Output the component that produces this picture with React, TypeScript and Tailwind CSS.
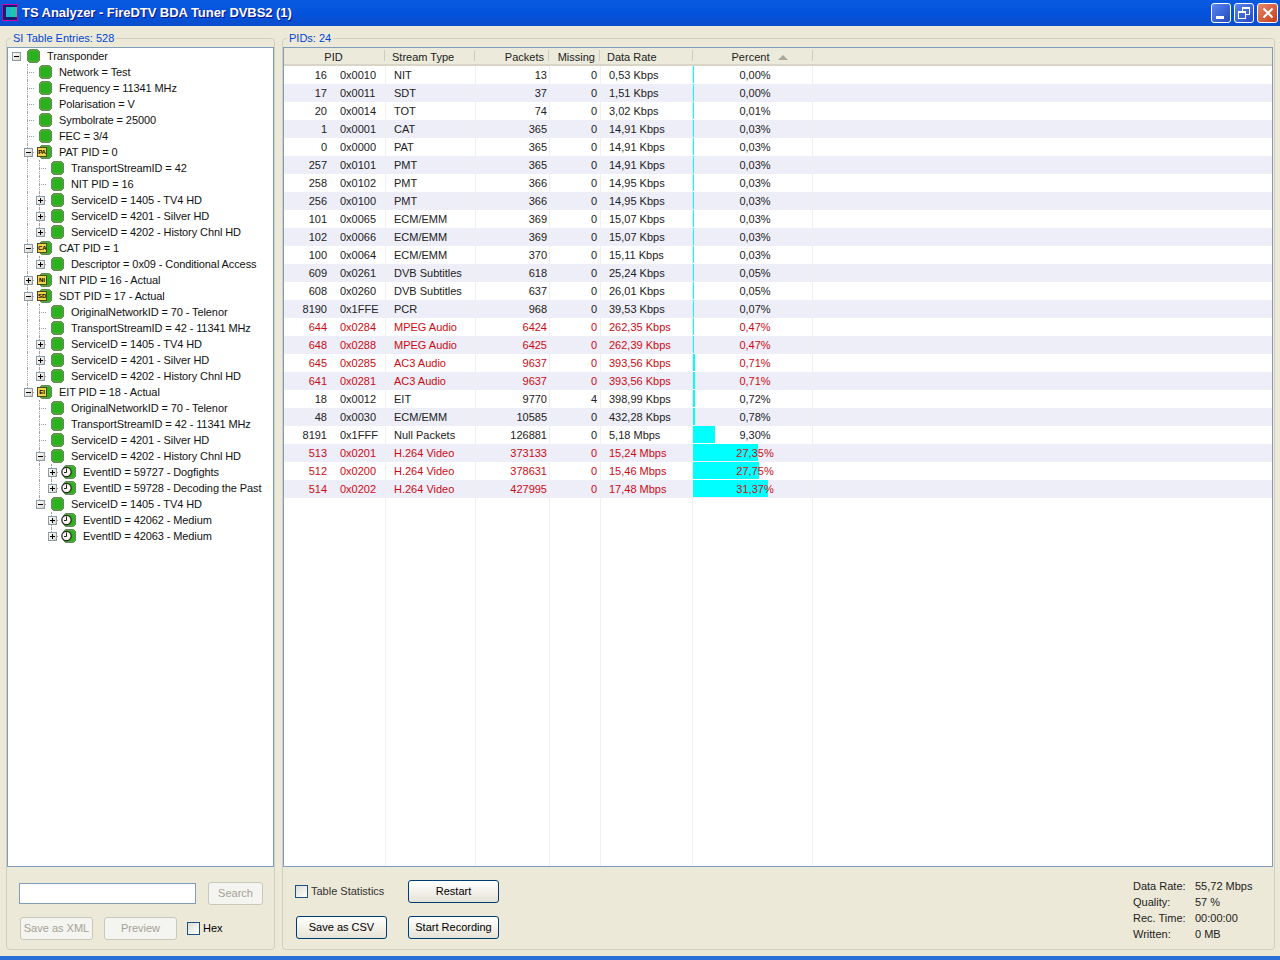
import React from 'react';

const font = "font-['Liberation_Sans',sans-serif]";

type Icon = 'dot' | 'PA' | 'CA' | 'NI' | 'SD' | 'EI' | 'clock';
type Node = { text: string; icon?: Icon; open?: boolean; kids?: Node[] };

const leaf = (text: string): Node => ({ text });
const closed = (text: string, icon?: Icon): Node => ({ text, icon, open: false, kids: [leaf('')] });

const tree: Node = {
  text: 'Transponder',
  open: true,
  kids: [
    leaf('Network = Test'),
    leaf('Frequency = 11341 MHz'),
    leaf('Polarisation = V'),
    leaf('Symbolrate = 25000'),
    leaf('FEC = 3/4'),
    {
      text: 'PAT PID = 0',
      icon: 'PA',
      open: true,
      kids: [
        leaf('TransportStreamID = 42'),
        leaf('NIT PID = 16'),
        closed('ServiceID = 1405 - TV4 HD'),
        closed('ServiceID = 4201 - Silver HD'),
        closed('ServiceID = 4202 - History Chnl HD'),
      ],
    },
    { text: 'CAT PID = 1', icon: 'CA', open: true, kids: [closed('Descriptor = 0x09 - Conditional Access')] },
    closed('NIT PID = 16 - Actual', 'NI'),
    {
      text: 'SDT PID = 17 - Actual',
      icon: 'SD',
      open: true,
      kids: [
        leaf('OriginalNetworkID = 70 - Telenor'),
        leaf('TransportStreamID = 42 - 11341 MHz'),
        closed('ServiceID = 1405 - TV4 HD'),
        closed('ServiceID = 4201 - Silver HD'),
        closed('ServiceID = 4202 - History Chnl HD'),
      ],
    },
    {
      text: 'EIT PID = 18 - Actual',
      icon: 'EI',
      open: true,
      kids: [
        leaf('OriginalNetworkID = 70 - Telenor'),
        leaf('TransportStreamID = 42 - 11341 MHz'),
        leaf('ServiceID = 4201 - Silver HD'),
        {
          text: 'ServiceID = 4202 - History Chnl HD',
          open: true,
          kids: [closed('EventID = 59727 - Dogfights', 'clock'), closed('EventID = 59728 - Decoding the Past', 'clock')],
        },
        {
          text: 'ServiceID = 1405 - TV4 HD',
          open: true,
          kids: [closed('EventID = 42062 - Medium', 'clock'), closed('EventID = 42063 - Medium', 'clock')],
        },
      ],
    },
  ],
};

type Flat = { node: Node; guides: boolean[]; last: boolean };

function flatten(node: Node, guides: boolean[], last: boolean, out: Flat[]) {
  out.push({ node, guides, last });
  if (node.open && node.kids) {
    node.kids.forEach((k, i) => flatten(k, [...guides, !last], i === node.kids!.length - 1, out));
  }
  return out;
}

const rows: [string, string, string, string, string, string, string][] = [
  ['16', '0x0010', 'NIT', '13', '0', '0,53 Kbps', '0,00'],
  ['17', '0x0011', 'SDT', '37', '0', '1,51 Kbps', '0,00'],
  ['20', '0x0014', 'TOT', '74', '0', '3,02 Kbps', '0,01'],
  ['1', '0x0001', 'CAT', '365', '0', '14,91 Kbps', '0,03'],
  ['0', '0x0000', 'PAT', '365', '0', '14,91 Kbps', '0,03'],
  ['257', '0x0101', 'PMT', '365', '0', '14,91 Kbps', '0,03'],
  ['258', '0x0102', 'PMT', '366', '0', '14,95 Kbps', '0,03'],
  ['256', '0x0100', 'PMT', '366', '0', '14,95 Kbps', '0,03'],
  ['101', '0x0065', 'ECM/EMM', '369', '0', '15,07 Kbps', '0,03'],
  ['102', '0x0066', 'ECM/EMM', '369', '0', '15,07 Kbps', '0,03'],
  ['100', '0x0064', 'ECM/EMM', '370', '0', '15,11 Kbps', '0,03'],
  ['609', '0x0261', 'DVB Subtitles', '618', '0', '25,24 Kbps', '0,05'],
  ['608', '0x0260', 'DVB Subtitles', '637', '0', '26,01 Kbps', '0,05'],
  ['8190', '0x1FFE', 'PCR', '968', '0', '39,53 Kbps', '0,07'],
  ['644', '0x0284', 'MPEG Audio', '6424', '0', '262,35 Kbps', '0,47'],
  ['648', '0x0288', 'MPEG Audio', '6425', '0', '262,39 Kbps', '0,47'],
  ['645', '0x0285', 'AC3 Audio', '9637', '0', '393,56 Kbps', '0,71'],
  ['641', '0x0281', 'AC3 Audio', '9637', '0', '393,56 Kbps', '0,71'],
  ['18', '0x0012', 'EIT', '9770', '4', '398,99 Kbps', '0,72'],
  ['48', '0x0030', 'ECM/EMM', '10585', '0', '432,28 Kbps', '0,78'],
  ['8191', '0x1FFF', 'Null Packets', '126881', '0', '5,18 Mbps', '9,30'],
  ['513', '0x0201', 'H.264 Video', '373133', '0', '15,24 Mbps', '27,35'],
  ['512', '0x0200', 'H.264 Video', '378631', '0', '15,46 Mbps', '27,75'],
  ['514', '0x0202', 'H.264 Video', '427995', '0', '17,48 Mbps', '31,37'],
];

const redPids = ['644', '648', '645', '641', '513', '512', '514'];

function GreenDot({ className = '' }: { className?: string }) {
  return (
    <svg width="13" height="14" viewBox="0 0 13 14" className={className}>
      <path d="M2.500 .5h8l2 2v9l-2 2h-8l-2-2v-9z" fill="#58a63c" stroke="#5f8a58" />
      <path d="M3 2h7l1.500 1.500v7L10 12H3l-1.500-1.500v-7z" fill="#2bb11e" />
    </svg>
  );
}

function TreeIcon({ icon }: { icon?: Icon }) {
  if (icon === 'clock') {
    return (
      <span className="relative w-[13px] h-[14px] shrink-0">
        <GreenDot className="absolute left-0 top-0" />
        <svg width="11" height="12" viewBox="0 0 11 12" className="absolute left-[-2px] top-[1px]">
          <circle cx="5.500" cy="6" r="4.700" fill="#f4f4ea" stroke="#222" strokeWidth="1.200" />
          <path d="M5.500 2.500V6.500H3" fill="none" stroke="#222" strokeWidth="1" />
        </svg>
      </span>
    );
  }
  if (icon && icon !== 'dot') {
    return (
      <span className="relative w-[13px] h-[14px] shrink-0">
        <GreenDot />
        <span className="absolute left-[-2px] top-[2px] w-[10px] h-[10px] bg-[#f3d34a] border border-[#4a4a18] text-[6px] leading-[8px] font-bold text-center text-black overflow-hidden">
          {icon}
        </span>
      </span>
    );
  }
  return <GreenDot className="shrink-0" />;
}

function Expander({ open }: { open: boolean }) {
  return (
    <span className="relative z-10 w-[9px] h-[9px] border border-[#8a9aa8] bg-gradient-to-br from-white to-[#d8d4c8] flex items-center justify-center">
      <span className="absolute w-[5px] h-px bg-black" />
      {!open && <span className="absolute w-px h-[5px] bg-black" />}
    </span>
  );
}

function TreeRow({ item, index }: { item: Flat; index: number }) {
  const { node, guides, last } = item;
  const hasKids = !!node.kids;
  return (
    <div className="flex items-center h-4 pl-[2px] text-[11px] tracking-[-0.1px] text-[#111] whitespace-nowrap">
      {guides.map((g, i) => (
        <span key={i} className="relative w-3 h-4 shrink-0">
          {g && i > 0 && <span className="absolute left-[5px] top-0 bottom-0 border-l border-dotted border-[#a0a0a0]" />}
        </span>
      ))}
      <span className="relative w-3 h-4 shrink-0 flex items-center justify-center">
        {index > 0 && (
          <span className={`absolute left-[5px] top-0 border-l border-dotted border-[#a0a0a0] ${last ? 'h-2' : 'h-4'}`} />
        )}
        {index > 0 && <span className="absolute left-[5px] top-[8px] w-[7px] border-t border-dotted border-[#a0a0a0]" />}
        {hasKids && <Expander open={!!node.open} />}
      </span>
      <span className="ml-[5px] flex">
        <TreeIcon icon={node.icon} />
      </span>
      <span className="ml-[7px]">{node.text}</span>
    </div>
  );
}

function HeaderCell({ className = '', children }: { className?: string; children: React.ReactNode }) {
  return (
    <div className={`relative h-full flex items-center pt-[2px] shrink-0 ${className}`}>
      {children}
      <span className="absolute right-0 top-[2px] bottom-[3px] w-px bg-[#cfccbc]" />
    </div>
  );
}

function PidTable() {
  return (
    <div className="relative h-full bg-white overflow-hidden">
      <div className="flex h-[18px] items-center bg-[#ebeadb] border-b-[2px] border-[#d8d5c6] text-[11px] text-[#222]">
        <HeaderCell className="w-[101px] justify-center pr-[2px]">PID</HeaderCell>
        <HeaderCell className="w-[90px] pl-[7px]">Stream Type</HeaderCell>
        <HeaderCell className="w-[74px] justify-end pr-[5px]">Packets</HeaderCell>
        <HeaderCell className="w-[51px] justify-end pr-[5px]">Missing</HeaderCell>
        <HeaderCell className="w-[93px] pl-[7px]">Data Rate</HeaderCell>
        <HeaderCell className="w-[120px] justify-center pr-[5px]">
          Percent
          <svg width="10" height="5" viewBox="0 0 10 5" className="absolute left-[85px] top-[7px]">
            <path d="M5 0l5 5H0z" fill="#aca899" />
          </svg>
        </HeaderCell>
      </div>
      {rows.map((r, i) => {
        const red = redPids.includes(r[0]);
        const pct = parseFloat(r[6].replace(',', '.'));
        return (
          <div
            key={r[0]}
            className={`flex h-[18px] items-center text-[11px] ${i % 2 ? 'bg-[#eeeef8]' : 'bg-white'} ${red ? 'text-[#cc0a14]' : 'text-[#222]'}`}
          >
            <div className="w-[43px] shrink-0 text-right">{r[0]}</div>
            <div className="w-[58px] shrink-0 pl-[13px]">{r[1]}</div>
            <div className="w-[90px] shrink-0 pl-[9px] whitespace-nowrap">{r[2]}</div>
            <div className="w-[72px] shrink-0 text-right">{r[3]}</div>
            <div className="w-[50px] shrink-0 text-right">{r[4]}</div>
            <div className="w-[95px] shrink-0 pl-[12px] whitespace-nowrap">{r[5]}</div>
            <div className="relative w-[120px] shrink-0 h-full pl-[6px] flex items-center justify-center">
              <span
                className="absolute left-[1px] top-0 h-[17px] bg-[#00ffff]"
                style={{ width: Math.max(1, Math.round(pct * 2.39)) }}
              />
              <span className="relative">{r[6]}%</span>
            </div>
          </div>
        );
      })}
      {[101, 191, 265, 316, 408, 528].map(x => (
        <span key={x} className="absolute top-[18px] bottom-0 w-px bg-[#f0f0ee]" style={{ left: x }} />
      ))}
    </div>
  );
}

function Check({ label, muted }: { label: string; muted?: boolean }) {
  return (
    <label className={`flex items-center gap-[3px] text-[11px] ${muted ? 'text-[#333]' : 'text-black'}`}>
      <span className="w-[13px] h-[13px] border border-[#1c5180] bg-gradient-to-br from-[#dcdcd7] to-white" />
      {label}
    </label>
  );
}

function Btn({ label, disabled, className = '' }: { label: string; disabled?: boolean; className?: string }) {
  return disabled ? (
    <button className={`h-[23px] rounded-[3px] border border-[#cac8bb] bg-[#f4f4f0] text-[11px] whitespace-nowrap text-[#a5a294] ${className}`}>
      {label}
    </button>
  ) : (
    <button className={`h-[23px] w-[91px] rounded-[3px] border border-[#003c74] bg-gradient-to-b from-white to-[#e6e3d6] text-[11px] whitespace-nowrap text-black ${className}`}>
      {label}
    </button>
  );
}

function Group({ legend, className = '', children }: { legend: string; className?: string; children: React.ReactNode }) {
  return (
    <div className={`relative border border-[#d0d0bf] rounded-[4px] pt-[8px] flex flex-col ${className}`}>
      <span className="absolute left-[4px] top-[-8px] bg-[#ece9d8] px-[2px] text-[11px] leading-[14px] text-[#0046d5]">
        {legend}
      </span>
      {children}
    </div>
  );
}

export default function App() {
  const flat = flatten(tree, [], true, []);
  return (
    <div className={`w-[1280px] h-[960px] overflow-hidden flex flex-col bg-[#ece9d8] ${font}`}>
      <div className="h-[26px] shrink-0 flex items-center bg-gradient-to-b from-[#0a5ae0] via-[#0352dd] to-[#0a4ecb]">
        <svg width="16" height="17" viewBox="0 0 16 17" className="ml-[2px] mt-[-1px] shrink-0">
          <rect x="0.500" y="0.500" width="15" height="16" fill="#14206e" stroke="#d000b0" />
          <rect x="4" y="3" width="11" height="10" fill="#1cc8a8" />
          <rect x="4" y="3" width="5" height="10" fill="#22b4d8" />
        </svg>
        <span className="ml-[4px] text-[13px] font-bold tracking-[-0.05px] text-white [text-shadow:1px_1px_#0f1089] whitespace-pre">
          TS Analyzer - FireDTV BDA Tuner DVBS2 (1)
        </span>
        <div className="ml-auto mr-[2px] flex gap-[3px]">
          <div className="relative w-[20px] h-[20px] rounded-[3px] border border-white bg-gradient-to-br from-[#5a86ee] to-[#2449c0]">
            <span className="absolute left-[4px] bottom-[3px] w-[8px] h-[3px] bg-white" />
          </div>
          <div className="relative w-[20px] h-[20px] rounded-[3px] border border-white bg-gradient-to-br from-[#5a86ee] to-[#2449c0]">
            <span className="absolute left-[7px] top-[3px] w-[8px] h-[8px] border border-white border-t-2" />
            <span className="absolute left-[3px] top-[7px] w-[8px] h-[8px] border border-white border-t-2 bg-[#3d64d8]" />
          </div>
          <div className="w-[21px] h-[20px] rounded-[3px] border border-white bg-gradient-to-br from-[#e8866a] to-[#c63a12] flex items-center justify-center">
            <svg width="12" height="12" viewBox="0 0 12 12">
              <path d="M1.500 1.500l9 9M10.500 1.500l-9 9" stroke="#fff" strokeWidth="2" />
            </svg>
          </div>
        </div>
      </div>

      <div className="flex-1 flex pt-[12px] pb-[6px] pl-[6px]">
        <Group legend="SI Table Entries: 528" className="w-[269px] h-[912px]">
          <div className="h-[820px] bg-white border border-[#7f9db9]">
            {flat.map((item, i) => (
              <TreeRow key={i} item={item} index={i} />
            ))}
          </div>
          <div className="pl-[12px] pt-[15px]">
            <div className="flex items-center gap-[12px]">
              <input className="w-[177px] h-[21px] bg-white border border-[#7f9db9]" />
              <Btn label="Search" disabled className="w-[55px]" />
            </div>
            <div className="flex items-center gap-[11px] mt-[12px] pl-px">
              <Btn label="Save as XML" disabled className="w-[73px]" />
              <Btn label="Preview" disabled className="w-[73px]" />
              <span className="-ml-px">
                <Check label="Hex" />
              </span>
            </div>
          </div>
        </Group>

        <Group legend="PIDs: 24" className="ml-[7px] w-[993px] h-[912px]">
          <div className="h-[820px] border border-[#7f9db9] mr-px">
            <PidTable />
          </div>
          <div className="flex justify-between pl-[13px] pr-[22px] pt-[13px]">
            <div className="flex gap-[21px]">
              <div className="flex flex-col gap-[13px] w-[91px]">
                <div className="h-[23px] -ml-px flex items-center whitespace-nowrap">
                  <Check label="Table Statistics" muted />
                </div>
                <Btn label="Save as CSV" />
              </div>
              <div className="flex flex-col gap-[13px]">
                <Btn label="Restart" />
                <Btn label="Start Recording" />
              </div>
            </div>
            <div className="grid grid-cols-[62px_57px] text-[11px] leading-[16px] text-[#222] -mt-[2px] whitespace-nowrap">
              <span>Data Rate:</span>
              <span>55,72 Mbps</span>
              <span>Quality:</span>
              <span>57 %</span>
              <span>Rec. Time:</span>
              <span>00:00:00</span>
              <span>Written:</span>
              <span>0 MB</span>
            </div>
          </div>
        </Group>
      </div>
      <div className="h-[4px] shrink-0 bg-[#2a6fd8]" />
    </div>
  );
}
